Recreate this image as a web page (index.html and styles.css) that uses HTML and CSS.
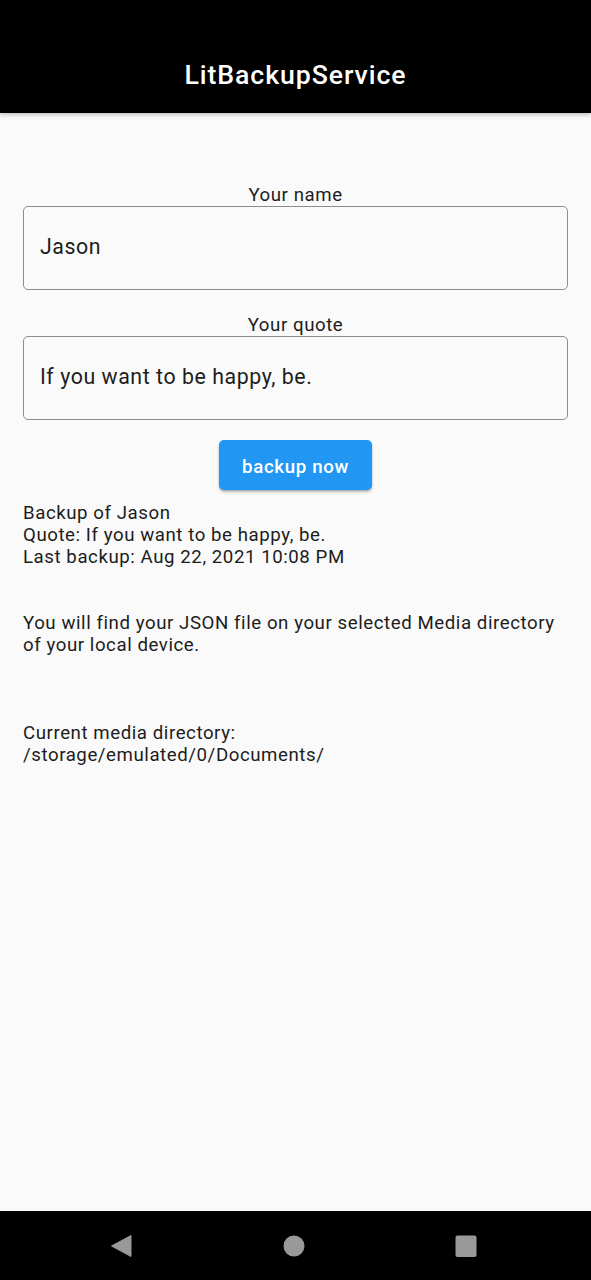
FILE: index.html
```html
<!DOCTYPE html>
<html lang="en">
<head>
<meta charset="utf-8">
<title>LitBackupService</title>
<link rel="stylesheet" href="styles.css">
</head>
<body>
<div class="screen">
  <header class="appbar">
    <h1 class="title">LitBackupService</h1>
  </header>
  <main class="content">
    <div class="field-group">
      <label class="field-label" for="name">Your name</label>
      <div class="field"><span class="field-value" id="name">Jason</span></div>
    </div>
    <div class="field-group">
      <label class="field-label" for="quote">Your quote</label>
      <div class="field"><span class="field-value" id="quote">If you want to be happy, be.</span></div>
    </div>
    <div class="actions">
      <button class="btn" type="button">backup now</button>
    </div>
    <div class="info">
      <p class="para">Backup of Jason<br>Quote: If you want to be happy, be.<br>Last backup: Aug 22, 2021 10:08 PM</p>
      <p class="para gap2">You will find your JSON file on your selected Media directory of your local device.</p>
      <p class="para gap3">Current media directory:<br>/storage/emulated/0/Documents/</p>
    </div>
  </main>
  <nav class="navbar">
    <svg class="nav-icon" width="24" height="24" viewBox="0 0 24 24"><path d="M21 1.5 L21 22.5 L1.5 12 Z" fill="#999" stroke="#999" stroke-width="1" stroke-linejoin="round"/></svg>
    <svg class="nav-icon" width="24" height="24" viewBox="0 0 24 24"><circle cx="12" cy="12" r="10.5" fill="#999"/></svg>
    <svg class="nav-icon" width="24" height="24" viewBox="0 0 24 24"><rect x="1.5" y="1.5" width="21" height="21.5" rx="2" fill="#999"/></svg>
  </nav>
</div>
</body>
</html>
```
FILE: styles.css
```css
* { box-sizing: border-box; }
html, body { margin: 0; padding: 0; }
body {
  background: #fafafa;
  font-family: Roboto, "Noto Sans", "Liberation Sans", sans-serif;
  color: #1d1d1d;
  letter-spacing: 0.035em;
}
.screen {
  display: flex;
  flex-direction: column;
  height: 1280px;
  width: 591px;
}
.appbar {
  height: 113px;
  background: #000;
  display: flex;
  align-items: flex-end;
  justify-content: center;
  padding-bottom: 22px;
  box-shadow: 0 2px 4px rgba(0,0,0,0.22);
  position: relative;
  z-index: 1;
}
.title {
  margin: 0;
  color: #fff;
  font-size: 26.67px;
  font-weight: 500;
  line-height: 31px;
  letter-spacing: 0.035em;
}
.content {
  flex: 1;
  padding: 71px 23px 0;
  display: flex;
  flex-direction: column;
}
.field-group {
  display: flex;
  flex-direction: column;
  align-items: center;
}
.field-group + .field-group { margin-top: 24px; }
.field-label {
  font-size: 18.67px;
  line-height: 22px;
  color: #1d1d1d;
}
.field {
  align-self: stretch;
  height: 84px;
  border: 1px solid #8e8e8e;
  border-radius: 5px;
  display: flex;
  align-items: center;
  padding: 0 16px 3px;
}
.field-value {
  font-size: 21.33px;
  color: #1d1d1d;
}
.actions {
  display: flex;
  justify-content: center;
  margin-top: 20px;
}
.btn {
  width: 153px;
  height: 50px;
  border: 0;
  border-radius: 5px;
  background: #2196f3;
  color: #fff;
  font-family: Roboto, "Noto Sans", "Liberation Sans", sans-serif;
  font-size: 18.67px;
  font-weight: 500;
  letter-spacing: 0.035em;
  padding: 3px 0 0;
  box-shadow: 0 2px 3px rgba(0,0,0,0.25), 0 1px 1px rgba(0,0,0,0.12);
}
.info { margin-top: 12px; }
.para {
  margin: 0;
  font-size: 18.67px;
  line-height: 22px;
  color: #1d1d1d;
}
.gap2 { margin-top: 44px; }
.gap3 { margin-top: 66px; }
.navbar {
  height: 69px;
  background: #000;
  display: flex;
  align-items: center;
  justify-content: space-between;
  padding: 0 113px 0 110px;
}
.nav-icon { display: block; }
```
